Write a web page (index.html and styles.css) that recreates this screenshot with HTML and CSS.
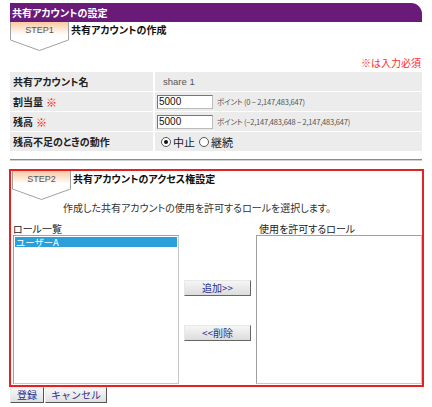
FILE: index.html
```html
<!DOCTYPE html>
<html lang="ja">
<head>
<meta charset="utf-8">
<link rel="stylesheet" href="styles.css">
</head>
<body>
<div class="page">
  <div class="titlebar">共有アカウントの設定</div>

  <div class="step">
    <div class="steptab">
      <svg width="59" height="29" viewBox="0 0 59 29">
        <defs>
          <linearGradient id="g1" x1="0" y1="0" x2="0" y2="1">
            <stop offset="0" stop-color="#f9c9a0"/>
            <stop offset="0.45" stop-color="#ffffff"/>
          </linearGradient>
        </defs>
        <path d="M0.5 0 V18 L29.5 28.5 L58.5 18 V0" fill="url(#g1)" stroke="#a0a0a0" stroke-width="1"/>
      </svg>
      <span class="steplabel">STEP1</span>
    </div>
    <div class="steptitle">共有アカウントの作成</div>
  </div>

  <div class="required">※は入力必須</div>

  <div class="formgrid">
    <div class="lbl">共有アカウント名</div>
    <div class="val"><span class="plain">share 1</span></div>
    <div class="lbl">割当量 <span class="mark">※</span></div>
    <div class="val"><span class="inp">5000</span><span class="hint">ポイント (0 − 2,147,483,647)</span></div>
    <div class="lbl">残高 <span class="mark">※</span></div>
    <div class="val"><span class="inp">5000</span><span class="hint">ポイント (−2,147,483,648 − 2,147,483,647)</span></div>
    <div class="lbl">残高不足のときの動作</div>
    <div class="val radios">
      <span class="radio on"></span><span class="rtext">中止</span>
      <span class="radio"></span><span class="rtext">継続</span>
    </div>
  </div>

  <div class="rule"></div>

  <div class="redbox">
    <div class="step step2">
      <div class="steptab">
        <svg width="59" height="29" viewBox="0 0 59 29">
          <defs>
            <linearGradient id="g2" x1="0" y1="0" x2="0" y2="1">
              <stop offset="0" stop-color="#f9c9a0"/>
              <stop offset="0.45" stop-color="#ffffff"/>
            </linearGradient>
          </defs>
          <path d="M0.5 0 V18 L29.5 28.5 L58.5 18 V0" fill="url(#g2)" stroke="#a0a0a0" stroke-width="1"/>
        </svg>
        <span class="steplabel">STEP2</span>
      </div>
      <div class="steptitle">共有アカウントのアクセス権設定</div>
    </div>

    <div class="desc">作成した共有アカウントの使用を許可するロールを選択します。</div>

    <div class="roles">
      <div class="col">
        <div class="coltitle">ロール一覧</div>
        <div class="listbox"><div class="item sel">ユーザーA</div></div>
      </div>
      <div class="btns">
        <button class="btn">追加&gt;&gt;</button>
        <button class="btn">&lt;&lt;削除</button>
      </div>
      <div class="col">
        <div class="coltitle">使用を許可するロール</div>
        <div class="listbox"></div>
      </div>
    </div>
  </div>

  <div class="actions">
    <button class="abtn">登録</button><button class="abtn">キャンセル</button>
  </div>
</div>
</body>
</html>
```

FILE: styles.css
```css
* { box-sizing: border-box; }
body {
  margin: 0;
  background: #fff;
  font-family: "Noto Sans CJK JP", "Liberation Sans", sans-serif;
  font-size: 10px;
  color: #222;
  font-feature-settings: "palt";
}
.page {
  width: 414px;
  margin-left: 9px;
  padding-top: 3px;
}
.titlebar {
  height: 19px;
  margin-left: 1px;
  width: 412px;
  background: #6a1a79;
  color: #fff;
  font-weight: bold;
  font-size: 10px;
  line-height: 19px;
  padding-left: 2px;
  border-top-right-radius: 11px;
}
.step {
  display: flex;
  align-items: flex-start;
  margin-left: 1px;
  height: 29px;
}
.steptab {
  position: relative;
  width: 59px;
  height: 29px;
}
.steptab svg { display: block; }
.steplabel {
  position: absolute;
  left: 0;
  top: 3px;
  width: 59px;
  text-align: center;
  font-family: "Liberation Sans", sans-serif;
  font-size: 9px;
  color: #555;
}
.steptitle {
  margin-left: 2px;
  margin-top: 1px;
  font-weight: bold;
  font-size: 10px;
  line-height: 14px;
  color: #111;
}
.required {
  margin-top: 6px;
  text-align: right;
  color: #ff2a2a;
  font-size: 10px;
  line-height: 12px;
  padding-right: 2px;
}
.formgrid {
  margin-top: 3px;
  margin-left: 1px;
  width: 412px;
  display: grid;
  grid-template-columns: 143px 1fr;
  grid-auto-rows: 19px;
  gap: 1px 2px;
}
.lbl, .val {
  background: #ececec;
  display: flex;
  align-items: center;
}
.lbl {
  padding-left: 3px;
  font-weight: bold;
  font-size: 10px;
  color: #222;
}
.mark { color: #ff1010; margin-left: 3px; font-size: 11px; }
.val { padding-left: 2px; }
.plain {
  margin-left: 6px;
  font-family: "Liberation Sans", sans-serif;
  color: #555;
  font-size: 9.5px;
}
.inp {
  width: 56px;
  height: 14px;
  background: #fff;
  border: 1px solid #777;
  border-right-color: #bbb;
  border-bottom-color: #bbb;
  font-family: "Liberation Sans", sans-serif;
  font-size: 10px;
  line-height: 12px;
  padding-left: 1px;
  color: #111;
}
.hint {
  margin-left: 4px;
  font-size: 7.5px;
  color: #555;
  letter-spacing: -0.2px;
}
.radios { padding-left: 6px; }
.radio {
  width: 10px;
  height: 10px;
  border-radius: 50%;
  border: 1px solid #555;
  background: #fff;
  position: relative;
}
.radio.on::after {
  content: "";
  position: absolute;
  left: 2px; top: 2px;
  width: 4px; height: 4px;
  border-radius: 50%;
  background: #111;
}
.rtext { margin: 0 4px 0 2px; font-size: 11px; color: #222; }
.rule {
  margin-top: 8px;
  margin-left: 1px;
  width: 412px;
  height: 2px;
  border-top: 1px solid #8a8a8a;
  border-bottom: 1px solid #d0d0d0;
}
.redbox {
  margin-top: 8px;
  width: 415px;
  height: 218px;
  border: 2px solid #e8201f;
  padding: 0 0 0 1px;
}
.step2 { margin-left: 0; margin-top: 0; }
.desc {
  margin-top: 2px;
  margin-left: 51px;
  font-size: 10px;
  line-height: 12px;
  color: #333;
}
.roles {
  display: flex;
  margin-top: 9px;
  margin-left: 1px;
}
.col { display: flex; flex-direction: column; }
.coltitle { font-size: 10px; line-height: 12px; color: #222; }
.col:last-child .coltitle { margin-left: 3px; }
.listbox {
  width: 166px;
  height: 149px;
  border: 1px solid #a0a0a0;
  border-right-color: #c8c8c8;
  border-bottom-color: #c8c8c8;
  background: #fff;
  padding: 1px;
}
.item {
  height: 10px;
  font-size: 9.5px;
  line-height: 10px;
  padding-left: 1px;
}
.item.sel { background: #2a9fd9; color: #fff; }
.btns {
  width: 78px;
  display: flex;
  flex-direction: column;
  align-items: center;
  padding-top: 57px;
  gap: 29px;
}
.btn {
  width: 67px;
  height: 16px;
  padding: 0;
  font-family: "Noto Sans CJK JP", sans-serif;
  font-size: 10px;
  line-height: 12px;
  color: #2c2f8a;
  background: linear-gradient(#f6f6f6, #dcdcdc);
  border: 1px solid #e8e8e8;
  border-right-color: #666;
  border-bottom-color: #666;
}
.actions {
  display: flex;
  margin-left: 1px;
}
.abtn {
  height: 16px;
  padding: 0 5px;
  font-family: "Noto Sans CJK JP", sans-serif;
  font-size: 10px;
  line-height: 12px;
  color: #2c2f8a;
  background: linear-gradient(#f8f8f8, #e0e0e0);
  border: 1px solid #eee;
  border-right-color: #555;
  border-bottom-color: #555;
  margin-right: 1px;
}
.abtn:first-child { width: 34px; }
.abtn:last-child { width: 62px; }
```
